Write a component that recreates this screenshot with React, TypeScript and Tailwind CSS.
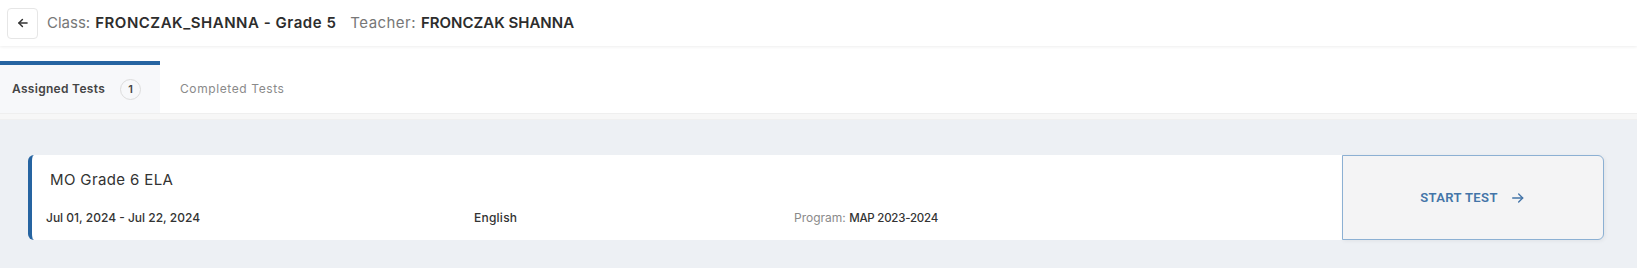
import React, { useState } from 'react';

const font = { fontFamily: 'Inter, "Noto Sans", sans-serif' };

const BackIcon: React.FC = () => (
    <svg width="14" height="14" viewBox="0 0 24 24" fill="none" stroke="#333" strokeWidth="2.6" strokeLinecap="round" strokeLinejoin="round">
        <path d="M19 12H5" />
        <path d="M11 6l-6 6 6 6" />
    </svg>
);

const ArrowRight: React.FC = () => (
    <svg width="16" height="16" viewBox="0 0 24 24" fill="none" stroke="currentColor" strokeWidth="2" strokeLinecap="round" strokeLinejoin="round">
        <path d="M4 12h15" />
        <path d="M13 6l6 6-6 6" />
    </svg>
);

const App: React.FC = () => {
    const [tab, setTab] = useState<'assigned' | 'completed'>('assigned');

    return (
        <div className="min-h-[268px] flex flex-col bg-white text-[#333]" style={font}>
            {/* Cabeçalho da turma */}
            <header className="h-[46px] flex items-center px-[7px] shadow-[0_1px_3px_rgba(0,0,0,0.07)] relative z-10">
                <button className="w-[31px] h-[31px] flex items-center justify-center border border-[#e6e6e6] rounded-[4px] bg-white">
                    <BackIcon />
                </button>
                <div className="ml-[9px] text-[15px] flex items-center">
                    <span className="text-[#777]">Class:</span>
                    <span className="ml-[5px] font-semibold text-[#2d2d2d] tracking-[0.035em]">FRONCZAK_SHANNA - Grade 5</span>
                    <span className="ml-[14px] text-[#777] tracking-[0.03em]">Teacher:</span>
                    <span className="ml-[5px] font-semibold text-[#2d2d2d]">FRONCZAK SHANNA</span>
                </div>
            </header>

            {/* Abas */}
            <div className="mt-[15px] flex">
                <button
                    onClick={() => setTab('assigned')}
                    className={`w-[160px] h-[52px] flex items-center pl-[12px] border-t-4 ${tab === 'assigned' ? 'border-[#2664a1] bg-[#f7f8fa]' : 'border-transparent'}`}
                >
                    <span className="text-[12px] font-semibold text-[#444] tracking-[0.025em]">Assigned Tests</span>
                    <span className="ml-[15px] w-[21px] h-[21px] rounded-full border border-[#dcdcdc] flex items-center justify-center text-[11px] font-semibold text-[#444]">1</span>
                </button>
                <button
                    onClick={() => setTab('completed')}
                    className={`h-[52px] flex items-center pl-[20px] pr-[20px] border-t-4 ${tab === 'completed' ? 'border-[#2664a1] bg-[#f7f8fa]' : 'border-transparent'}`}
                >
                    <span className="text-[12px] text-[#8a8a8a] tracking-[0.05em]">Completed Tests</span>
                </button>
            </div>
            <div className="h-[7px] bg-[#f7f7f7] border-t border-[#efefef] border-b border-b-[#f0f0f0]" />

            {/* Lista de testes */}
            <main className="flex-1 bg-[#edf0f4] pt-[35px] pl-[28px] pr-[33px] pb-[28px]">
                <div className="flex h-[85px]">
                    <div className="flex-1 bg-white rounded-l-[6px] border-l-4 border-[#2664a1] pl-[18px] flex flex-col">
                        <div className="mt-[14px] text-[15px] text-[#333] tracking-[0.025em]">MO Grade 6 ELA</div>
                        <div className="mt-[17px] flex items-center text-[12px] font-medium text-[#333]">
                            <span className="w-[428px] -ml-[4px]">Jul 01, 2024 - Jul 22, 2024</span>
                            <span className="w-[320px] tracking-[0.02em]">English</span>
                            <span>
                                <span className="font-normal text-[#8a8a8a]">Program: </span>
                                <span className="text-[11.5px] tracking-[-0.02em]">MAP 2023-2024</span>
                            </span>
                        </div>
                    </div>
                    <button className="w-[262px] bg-[#f4f4f5] border border-[#8cb0d3] rounded-r-[6px] shadow-[1px_1px_4px_rgba(0,0,0,0.06)] flex items-center justify-center gap-[12px] text-[#4374a8] text-[13px] font-semibold tracking-[0.03em]" style={{ fontFamily: 'Roboto, Inter, sans-serif' }}>
                        START TEST
                        <ArrowRight />
                    </button>
                </div>
            </main>
        </div>
    );
};

export default App;
